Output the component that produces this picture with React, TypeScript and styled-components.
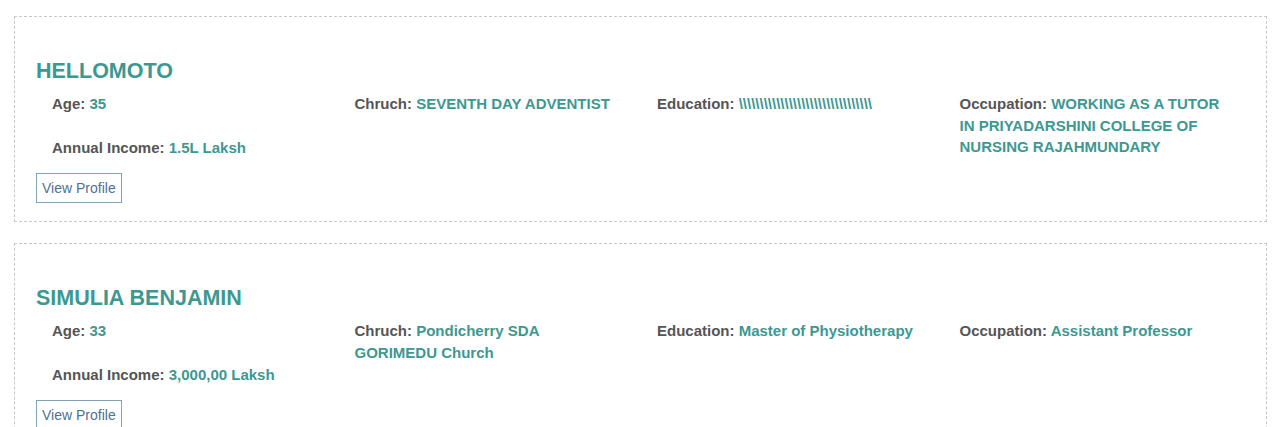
import styled, { createGlobalStyle } from "styled-components";

const GlobalStyle = createGlobalStyle`
  body {
    margin: 0;
    background: #ffffff;
    font-family: "Liberation Sans", Arial, sans-serif;
  }
`;

const Page = styled.div`
  padding: 16px 13px 0 14px;
  display: flex;
  flex-direction: column;
  gap: 21px;
`;

const Card = styled.div`
  border: 1px dashed #c8c8c8;
  padding: 42px 21px 18px 21px;
`;

const Name = styled.h2`
  margin: 0 0 10px;
  font-size: 21.5px;
  line-height: 24px;
  font-weight: bold;
  color: #3d9892;
`;

const Details = styled.div`
  display: grid;
  grid-template-columns: repeat(4, 302.5px);
  padding-left: 16px;
`;

const Column = styled.div`
  display: flex;
  flex-direction: column;
  gap: 22px;
`;

const Field = styled.p`
  margin: 0;
  font-size: 15px;
  line-height: 21.5px;
  font-weight: bold;
  color: #555555;
  padding-right: 36px;
`;

const Value = styled.span`
  color: #3d9892;
`;

const ViewButton = styled.button`
  margin-top: 15px;
  background: #ffffff;
  border: 1px solid #7ea5b6;
  color: #4f7191;
  font-family: "Liberation Sans", Arial, sans-serif;
  font-size: 14px;
  line-height: 18px;
  padding: 5px 5px;
  cursor: pointer;
`;

interface Profile {
  name: string;
  age: string;
  income: string;
  church: string;
  education: string;
  occupation: string;
}

const profiles: Profile[] = [
  {
    name: "HELLOMOTO",
    age: "35",
    income: "1.5L Laksh",
    church: "SEVENTH DAY ADVENTIST",
    education: "\\".repeat(32),
    occupation: "WORKING AS A TUTOR IN PRIYADARSHINI COLLEGE OF NURSING RAJAHMUNDARY",
  },
  {
    name: "SIMULIA BENJAMIN",
    age: "33",
    income: "3,000,00 Laksh",
    church: "Pondicherry SDA GORIMEDU Church",
    education: "Master of Physiotherapy",
    occupation: "Assistant Professor",
  },
];

const ProfileCard = ({ profile }: { profile: Profile }) => (
  <Card>
    <Name>{profile.name}</Name>
    <Details>
      <Column>
        <Field>
          Age: <Value>{profile.age}</Value>
        </Field>
        <Field>
          Annual Income: <Value>{profile.income}</Value>
        </Field>
      </Column>
      <Column>
        <Field>
          Chruch: <Value>{profile.church}</Value>
        </Field>
      </Column>
      <Column>
        <Field>
          Education: <Value>{profile.education}</Value>
        </Field>
      </Column>
      <Column>
        <Field>
          Occupation: <Value>{profile.occupation}</Value>
        </Field>
      </Column>
    </Details>
    <ViewButton>View Profile</ViewButton>
  </Card>
);

const App = () => (
  <>
    <GlobalStyle />
    <Page>
      {profiles.map((p) => (
        <ProfileCard key={p.name} profile={p} />
      ))}
    </Page>
  </>
);

export default App;
